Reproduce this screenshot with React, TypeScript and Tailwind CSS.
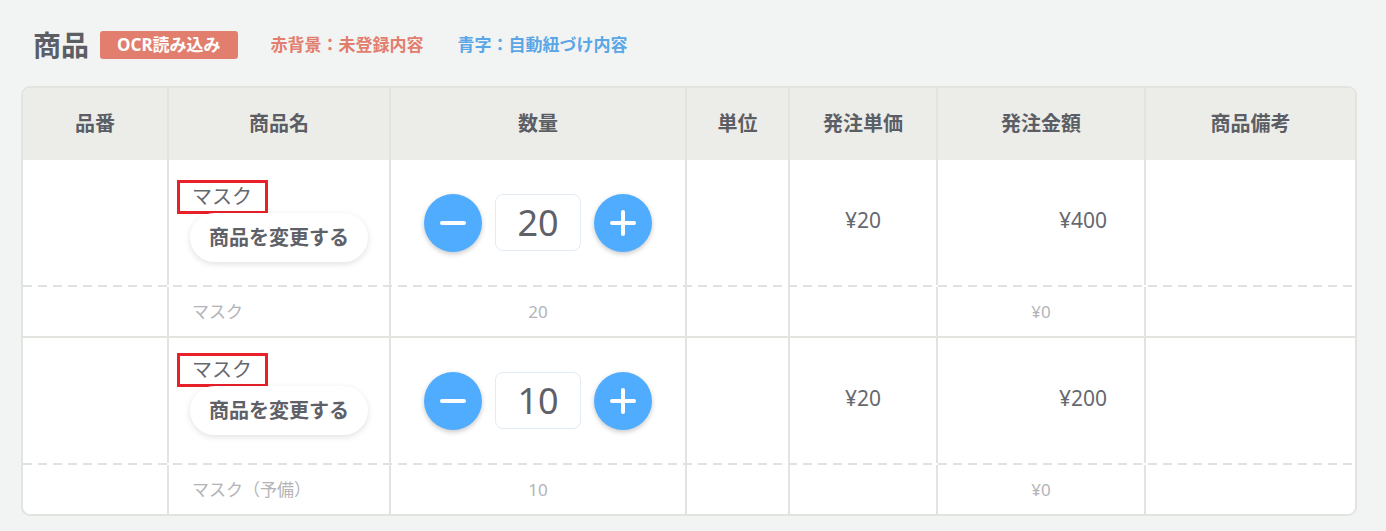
import React from "react";

const cols = "grid grid-cols-[146px_222px_296px_103px_148px_208px_1fr]";
const cell = "border-r-2 border-[#e1e4df]";
const font = { fontFamily: '"Noto Sans", "Noto Sans CJK JP", sans-serif' };

type Item = {
  name: string;
  qty: number;
  price: string;
  amount: string;
  subName: string;
  subQty: string;
  subAmount: string;
  pad: string;
};

const items: Item[] = [
  { name: "マスク", qty: 20, price: "¥20", amount: "¥400", subName: "マスク", subQty: "20", subAmount: "¥0", pad: "pt-[20px]" },
  { name: "マスク", qty: 10, price: "¥20", amount: "¥200", subName: "マスク（予備）", subQty: "10", subAmount: "¥0", pad: "pt-[15px]" },
];

function Circle({ plus }: { plus?: boolean }) {
  return (
    <button className="w-[58px] h-[58px] rounded-full bg-[#4facfe] shadow-[0_2px_5px_rgba(0,0,0,0.22)] flex items-center justify-center">
      <svg width="30" height="30" viewBox="0 0 30 30">
        <line x1="4" y1="15" x2="26" y2="15" stroke="white" strokeWidth="4" strokeLinecap="round" />
        {plus && <line x1="15" y1="4" x2="15" y2="26" stroke="white" strokeWidth="4" strokeLinecap="round" />}
      </svg>
    </button>
  );
}

function Row({ item, last }: { item: Item; last: boolean }) {
  return (
    <div className={last ? "" : "border-b-2 border-[#e1e4df]"}>
      <div className={`${cols} h-[125px]`}>
        <div className={cell} />
        <div className={`${cell} pl-[8px] ${item.pad}`}>
          <div className="relative">
            <div className="w-[91px] h-[34px] border-[3px] border-[#e8202a] pl-[12px] text-[20px] leading-[27px] text-[#66686f]">
              {item.name}
            </div>
            <button className="ml-[13px] -mt-[1px] w-[178px] h-[49px] rounded-full bg-white shadow-[0_2px_6px_rgba(0,0,0,0.12)] text-[20px] font-bold text-[#5f6168]">
              商品を変更する
            </button>
          </div>
        </div>
        <div className={`${cell} flex items-center justify-center gap-[13px]`}>
          <Circle />
          <div className="w-[86px] h-[57px] rounded-[8px] border-[1.5px] border-[#e3ebf4] flex items-center justify-center text-[36px] text-[#5f6168]">
            {item.qty}
          </div>
          <Circle plus />
        </div>
        <div className={cell} />
        <div className={`${cell} flex items-center justify-center text-[21px] text-[#66686f] pb-[4px]`}>{item.price}</div>
        <div className={`${cell} flex items-center justify-end pr-[37px] text-[21px] text-[#66686f] pb-[4px]`}>{item.amount}</div>
        <div />
      </div>
      <div className="h-[2px] bg-[repeating-linear-gradient(90deg,#dfe2de_0_9px,transparent_9px_15px)]" />
      <div className={`${cols} h-[49px] text-[17px] text-[#b3b4b8]`}>
        <div className={cell} />
        <div className={`${cell} flex items-center pl-[23px]`}>{item.subName}</div>
        <div className={`${cell} flex items-center justify-center`}>{item.subQty}</div>
        <div className={cell} />
        <div className={cell} />
        <div className={`${cell} flex items-center justify-center`}>{item.subAmount}</div>
        <div />
      </div>
    </div>
  );
}

export default function App() {
  const headers = ["品番", "商品名", "数量", "単位", "発注単価", "発注金額", "商品備考"];
  return (
    <div className="w-[1386px] h-[531px] bg-[#f2f4f3] pl-[21px] pt-[26px]" style={font}>
      <div className="flex items-center h-[38px] pl-[12px]">
        <h2 className="text-[28px] font-bold text-[#5c5e65] leading-none">商品</h2>
        <span className="ml-[11px] h-[28px] px-[17px] rounded-[3px] bg-[#e27e6e] text-white text-[17px] font-bold flex items-center">
          OCR読み込み
        </span>
        <span className="ml-[33px] text-[17px] font-bold text-[#e27e6e]">赤背景：未登録内容</span>
        <span className="ml-[34px] text-[17px] font-bold text-[#5aa6e6]">青字：自動紐づけ内容</span>
      </div>
      <div className="mt-[22px] w-[1336px] border-2 border-[#e1e4df] rounded-[9px] bg-white overflow-hidden">
        <div className={`${cols} h-[72px] bg-[#ecede9]`}>
          {headers.map((h, i) => (
            <div
              key={h}
              className={`${i < 6 ? cell : ""} flex items-center justify-center text-[20px] font-bold text-[#5c5e65]`}
            >
              {h}
            </div>
          ))}
        </div>
        {items.map((it, i) => (
          <Row key={i} item={it} last={i === items.length - 1} />
        ))}
      </div>
    </div>
  );
}
